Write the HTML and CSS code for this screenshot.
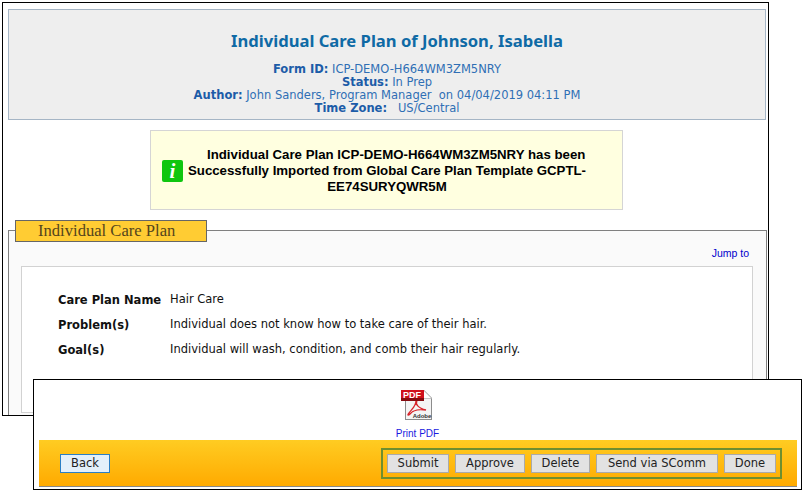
FILE: index.html
```html
<!DOCTYPE html>
<html lang="en">
<head>
  <meta charset="UTF-8">
  <title>Individual Care Plan</title>
  <link rel="stylesheet" href="styles.css">
</head>
<body>

  <div class="mainWindow">
    <div class="formHeader">
      <h1>Individual Care Plan of Johnson, Isabella</h1>
      <div class="formMeta">
        <div><strong>Form ID:</strong> ICP-DEMO-H664WM3ZM5NRY</div>
        <div><strong>Status:</strong> In Prep</div>
        <div><strong>Author:</strong> John Sanders, Program Manager&nbsp; on 04/04/2019 04:11 PM</div>
        <div><strong>Time Zone:</strong> &nbsp; US/Central</div>
      </div>
    </div>

    <div class="notice">
      <span class="noticeIcon">i</span>
      <p>&nbsp;&nbsp;&nbsp;&nbsp;&nbsp;Individual Care Plan ICP-DEMO-H664WM3ZM5NRY has been Successfully Imported from Global Care Plan Template GCPTL-EE74SURYQWR5M</p>
    </div>

    <div class="planSection">
      <div class="planLegend">Individual Care Plan</div>
      <div class="planBox">
        <div class="jumpRow"><a href="#">Jump to</a></div>
        <div class="planCard">
          <div class="planGrid">
            <div class="planLabel">Care Plan Name</div>
            <div>Hair Care</div>
            <div class="planLabel">Problem(s)</div>
            <div>Individual does not know how to take care of their hair.</div>
            <div class="planLabel">Goal(s)</div>
            <div>Individual will wash, condition, and comb their hair regularly.</div>
          </div>
        </div>
      </div>
    </div>
  </div>

  <div class="actionWindow">
    <a class="printLink" href="#">
      <svg width="32" height="32" viewBox="0 0 32 32">
        <path d="M4 1H23L31 9V31H4Z" fill="#8c8c8c"/>
        <path d="M5 2H22L30 10V30H5Z" fill="#f4f4f4"/>
        <path d="M22 1L31 10H22Z" fill="#c4c4c4"/>
        <path d="M23 2L30 9H23Z" fill="#ffffff"/>
        <rect x="0" y="1" width="23" height="11" fill="#d0101c"/>
        <rect x="0" y="9" width="23" height="3" fill="#860b10"/>
        <text x="11" y="9" class="pdfBadge">PDF</text>
        <path d="M16 12C14 15 17 19 25 21C19 20 12 21 9 25C7 27 6 26 8 24C11 20 15 17 15 12" fill="none" stroke="#d8232a" stroke-width="1.3"/>
        <text x="21" y="29" class="pdfAdobe">Adobe</text>
      </svg>
      <span>Print PDF</span>
    </a>
    <div class="actionBar">
      <button class="backBtn">Back</button>
      <div class="actionGroup">
        <button>Submit</button>
        <button>Approve</button>
        <button>Delete</button>
        <button>Send via SComm</button>
        <button>Done</button>
      </div>
    </div>
  </div>

</body>
</html>
```

FILE: styles.css
```css
html, body {
  height: 100%;
  margin: 0;
  background: #fff;
  overflow: hidden;
  font-family: "DejaVu Sans", Verdana, sans-serif;
}

/* the two captured windows sit over each other on the canvas */
.mainWindow {
  position: absolute;
  left: 2px;
  top: 2px;
  width: 767px;
  height: 414px;
  border: 1px solid #000;
  background: #fff;
  overflow: hidden;
  padding: 6px 0 0 5px;
  box-sizing: border-box;
}

.formHeader {
  width: 758px;
  height: 111px;
  box-sizing: border-box;
  background: #eeeeee;
  border: 1px solid #a5b5c5;
  text-align: center;
  padding-top: 21px;
}

.formHeader h1 {
  margin: 0 0 11.5px;
  padding-left: 20px;
  font-family: "Noto Sans", sans-serif;
  font-size: 16.6px;
  line-height: 20px;
  color: #0f6aa5;
}

.formMeta {
  font-size: 11.5px;
  line-height: 13px;
  color: #2f6fb5;
}

.formMeta strong {
  color: #1c5ca8;
}

.notice {
  width: 473px;
  height: 80px;
  box-sizing: border-box;
  margin: 10px 0 0 142px;
  background: #ffffe0;
  border: 1px solid #d5d5d5;
  display: flex;
  align-items: center;
  padding: 0 34px 0 11px;
  gap: 3px;
}

.noticeIcon {
  flex: none;
  width: 21px;
  height: 22px;
  margin-top: 2px;
  border-radius: 2px;
  background: #0fc60f;
  color: #fff;
  font: italic bold 21px/22px "Liberation Serif", serif;
  text-align: center;
}

.notice p {
  margin: 2px 0 0;
  font: bold 13.25px/16px "Liberation Sans", Arial, sans-serif;
  color: #000;
  text-align: center;
}

.planSection {
  position: relative;
  margin-top: 10px;
  padding-top: 10px;
}

.planLegend {
  position: absolute;
  left: 7px;
  top: 0;
  width: 192px;
  height: 22px;
  box-sizing: border-box;
  padding-left: 22px;
  background: #ffcc33;
  border: 1px solid #666;
  font: 16.6px/20px "Liberation Serif", serif;
  color: #54451c;
}

.planBox {
  width: 759px;
  height: 200px;
  box-sizing: border-box;
  background: #fafafa;
  border: 1px solid #808080;
  padding: 0 13px 0 12px;
}

.jumpRow {
  height: 35px;
  padding: 16px 4px 0 0;
  box-sizing: border-box;
  text-align: right;
  font: 10.5px/13px "Liberation Sans", Arial, sans-serif;
}

.jumpRow a {
  color: #0000cc;
  text-decoration: none;
}

.planCard {
  height: 147px;
  box-sizing: border-box;
  background: #fff;
  border: 1px solid #d2d2d2;
  padding: 25px 36px;
}

.planGrid {
  display: grid;
  grid-template-columns: 112px 1fr;
  row-gap: 10px;
  font-size: 11.5px;
  line-height: 14px;
  color: #111;
}

.planLabel {
  font-weight: bold;
  padding-top: 1px;
}

.actionWindow {
  position: absolute;
  left: 33px;
  top: 379px;
  width: 769px;
  height: 111px;
  box-sizing: border-box;
  border: 1px solid #000;
  background: #fff;
  padding: 0 4px 2px 5px;
  display: flex;
  flex-direction: column;
}

.printLink {
  height: 60px;
  display: flex;
  flex-direction: column;
  align-items: center;
  justify-content: flex-end;
  text-decoration: none;
  color: #1a1ae0;
  font: 10px/12px "Liberation Sans", Arial, sans-serif;
  padding-right: 1px;
  box-sizing: border-box;
}

.printLink svg {
  margin-bottom: 7px;
  margin-left: -1px;
}

.pdfBadge {
  font: bold 9px "Liberation Sans", Arial, sans-serif;
  fill: #fff;
  text-anchor: middle;
}

.pdfAdobe {
  font: bold 6px "Liberation Sans", Arial, sans-serif;
  fill: #333;
  text-anchor: middle;
}

.actionBar {
  flex: 1;
  display: flex;
  align-items: center;
  justify-content: space-between;
  padding: 0 15px 0 21px;
  background: linear-gradient(#ffcc22, #ffaa00);
  border-bottom: 1px solid #888;
}

.actionGroup {
  display: grid;
  grid-template-columns: 62px 70px 59px 122px 52px;
  gap: 6px;
  padding: 4px;
  border: 2px solid #6f8f2f;
}

button {
  height: 19px;
  padding: 0;
  margin: 0;
  background: #e2e2e2;
  border: 1px solid #aaa;
  border-radius: 0;
  font-family: "DejaVu Sans", Verdana, sans-serif;
  font-size: 11.5px;
  color: #222;
  cursor: pointer;
}

.backBtn {
  width: 50px;
  background: #e3f0fa;
  border-color: #2a7fc5;
}
```
